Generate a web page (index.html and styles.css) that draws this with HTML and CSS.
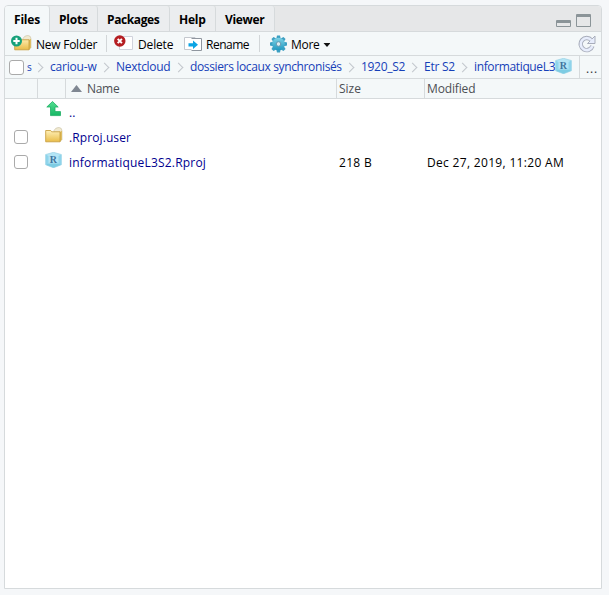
FILE: index.html
```html
<!DOCTYPE html>
<html lang="en">
<head>
<meta charset="utf-8">
<title>Files</title>
<link rel="stylesheet" href="styles.css">
</head>
<body>
<svg class="defs" width="0" height="0" aria-hidden="true">
  <defs>
    <linearGradient id="gold" x1="0" y1="0" x2="0" y2="1"><stop offset="0" stop-color="#fff0b8"/><stop offset="1" stop-color="#e9bc48"/></linearGradient>
    <linearGradient id="leaf" x1="0" y1="0" x2="0" y2="1"><stop offset="0" stop-color="#52df90"/><stop offset="1" stop-color="#17b765"/></linearGradient>
    <linearGradient id="teal" x1="0" y1="0" x2="0" y2="1"><stop offset="0" stop-color="#7fd3e6"/><stop offset="1" stop-color="#2198bf"/></linearGradient>
    <symbol id="folder" viewBox="0 0 18 17">
      <path d="M9 3.500Q10.500 .6 13 .6h1.500Q17 1 17 4v8.500l-2 2.300V5H9z" fill="#f1ead0" stroke="#cfc7ad" stroke-width=".7"/>
      <path d="M15 5l1.800-1.200v8.700L15 14.800z" fill="#dcb64e"/>
      <path d="M.7 3.500h5l1 1.300H15v10H.7z" fill="url(#gold)" stroke="#c9a144" stroke-width=".9"/>
    </symbol>
    <symbol id="cube" viewBox="0 0 17 16">
      <path d="M8.500 .3L16.300 2.500v10.300L8.500 15.800.7 12.800V2.500z" fill="#b4e5f5"/>
      <path d="M.7 2.500L3.500 4v7.500L.7 12.800zM13.500 4l2.800-1.500v10.300l-2.800-1.300z" fill="#8fd5ec"/>
      <path d="M.7 12.800l2.800-1.300h10l2.800 1.300-7.800 3z" fill="#7dcce3"/>
      <path d="M8.500 .3L16.300 2.500v10.300L8.500 15.800.7 12.800V2.500z" fill="none" stroke="#91cfe2" stroke-width=".6"/>
      <text x="8.300" y="10.800" text-anchor="middle" font-family="Liberation Serif, serif" font-size="10" font-weight="bold" fill="#40749e">R</text>
    </symbol>
  </defs>
</svg>
<main class="panel">
  <nav class="tabs">
    <div class="tab active t-files"><span>Files</span></div>
    <div class="tab t-plots"><span>Plots</span></div>
    <div class="tab t-packages"><span>Packages</span></div>
    <div class="tab t-help"><span>Help</span></div>
    <div class="tab t-viewer"><span>Viewer</span></div>
    <div class="window-buttons"><i class="minimize"></i><i class="maximize"></i></div>
  </nav>
  <div class="toolbar">
    <div class="tool new">
      <svg width="21" height="17" viewBox="0 0 21 17"><use href="#folder" x="3" y="0" width="18" height="17"/><circle cx="5.500" cy="6" r="5.500" fill="#16a17a"/><path d="M5.500 2.800v6.400M2.300 6h6.400" stroke="#fff" stroke-width="2"/></svg>
      <span>New Folder</span>
    </div>
    <div class="tool delete">
      <svg width="19" height="17" viewBox="0 0 19 17"><path d="M5.500 1.500h13v13h-13z" fill="#fff" stroke="#d0d3dc"/><circle cx="5.800" cy="6" r="5.700" fill="#b51e22"/><path d="M3.700 3.900l4.200 4.200M7.900 3.900L3.700 8.100" stroke="#fff" stroke-width="2"/></svg>
      <span>Delete</span>
    </div>
    <div class="tool rename">
      <svg width="18" height="16" viewBox="0 0 18 16"><path d="M.5 1.500h10.500v12H.5z" fill="#fff" stroke="#c4c8ce"/><path d="M7.500 2.500h10v12h-10" fill="#fff" stroke="#8f969f"/><path d="M5 5h8v7H5z" fill="#fff"/><path d="M4.500 7.200h4.500V4.500l5 4.300-5 4.300v-2.700H4.500z" fill="#0ba4e4"/></svg>
      <span>Rename</span>
    </div>
    <div class="tool more">
      <svg width="17" height="18" viewBox="-8.500 -9 17 18"><g fill="#3c9fc2"><path id="tooth" d="M-1.500-8.500h3l.9 4h-4.800z"/><use href="#tooth" transform="rotate(45)"/><use href="#tooth" transform="rotate(90)"/><use href="#tooth" transform="rotate(135)"/><use href="#tooth" transform="rotate(180)"/><use href="#tooth" transform="rotate(225)"/><use href="#tooth" transform="rotate(270)"/><use href="#tooth" transform="rotate(315)"/></g><circle r="6.300" fill="url(#teal)"/><circle r="2.300" fill="#dcecf1" stroke="#6298b1"/></svg>
      <span>More</span><i class="caret"></i>
    </div>
    <svg class="refresh" width="18" height="18" viewBox="0 0 18 18"><path d="M13.300 5.200A6 6 0 1 0 14.400 11" fill="none" stroke="#a8adbb" stroke-width="4.400"/><path d="M17 1v7.500H9.500z" fill="#e7edfc" stroke="#a8adbb"/><path d="M13.300 5.200A6 6 0 1 0 14.400 11" fill="none" stroke="#e7edfc" stroke-width="2.600"/></svg>
  </div>
  <div class="path">
    <i class="check"></i>
    <div class="crumb c-s"><span>s</span></div>
    <div class="crumb c-user"><span>cariou-w</span></div>
    <div class="crumb c-next"><span>Nextcloud</span></div>
    <div class="crumb c-doss"><span>dossiers locaux synchronisés</span></div>
    <div class="crumb c-year"><span>1920_S2</span></div>
    <div class="crumb c-etr"><span>Etr S2</span></div>
    <div class="crumb c-info"><span>informatiqueL3</span></div>
    <svg class="project" width="17" height="16"><use href="#cube"/></svg>
    <div class="browse">...</div>
  </div>
  <div class="grid header">
    <div></div><div></div>
    <div class="name"><i class="sort"></i><span>Name</span></div>
    <div class="size"><span>Size</span></div>
    <div class="modified"><span>Modified</span></div>
  </div>
  <div class="files">
    <div class="grid row up"><div></div>
      <div><svg width="16" height="16" viewBox="0 0 16 16"><path d="M6.500 .5l5.700 5.500H9v4.600h5.500v4H4.500V6H.8z" fill="url(#leaf)" stroke="#20ae65" stroke-width=".8"/></svg></div>
      <div><span>..</span></div><div></div><div></div></div>
    <div class="grid row user"><div><i class="check"></i></div>
      <div><svg width="18" height="17"><use href="#folder"/></svg></div>
      <div><span>.Rproj.user</span></div><div></div><div></div></div>
    <div class="grid row proj"><div><i class="check"></i></div>
      <div><svg width="17" height="16"><use href="#cube"/></svg></div>
      <div><span>informatiqueL3S2.Rproj</span></div>
      <div class="size"><span>218 B</span></div><div class="modified"><span>Dec 27, 2019, 11:20 AM</span></div></div>
  </div>
</main>
</body>
</html>
```
FILE: styles.css
```css
* { box-sizing: border-box; }
body { margin: 0; padding: 5px 7px 6px 4px; height: 595px; background: #f5f7f9; font: 12px/18px "Open Sans", "Noto Sans", sans-serif; color: #000; overflow: hidden; }
.defs { position: absolute; }
svg { display: block; flex: none; }
span { white-space: nowrap; }
.panel { height: 584px; display: flex; flex-direction: column; border: 1px solid #d6dadc; border-radius: 4px 4px 0 0; background: #fff; overflow: hidden; }
.tabs { height: 26px; flex: none; display: flex; background: #e6e7e8; border-bottom: 1px solid #d6dadc; }
.tab { height: 25px; flex: none; padding: 5px 0 0 9px; border-right: 1px solid #d6dadc; border-radius: 0 3px 0 0; background: #ebedef; font-weight: 700; letter-spacing: -.2px; }
.active { height: 26px; background: #f4f8f9; }
.t-files { width: 45px; }
.t-plots { width: 48px; }
.t-packages { width: 72px; letter-spacing: -.4px; }
.t-help { width: 46px; }
.t-viewer { width: 59px; letter-spacing: -.35px; }
.window-buttons { margin: 8px 10px 0 auto; display: flex; align-items: flex-end; height: 13px; gap: 5px; }
.minimize { width: 15px; height: 7px; border: 1px solid #8b9498; border-top-width: 3px; border-radius: 1px; }
.maximize { width: 15px; height: 13px; border: 1px solid #8b9498; border-top-width: 3px; border-radius: 1px; }
.toolbar { height: 24px; flex: none; display: flex; background: #f4f8f9; border-bottom: 1px solid #d6dadc; }
.tool { height: 17px; margin-top: 3px; display: flex; flex: none; }
.tool span { margin-top: 1px; }
.new { width: 102px; padding-left: 6px; gap: 4px; border-right: 1px solid #d2d6d8; }
.new span { letter-spacing: -.25px; }
.delete { width: 72px; padding-left: 7px; gap: 5px; letter-spacing: -.15px; }
.rename { width: 81px; padding-left: 5px; gap: 4px; border-right: 1px solid #d2d6d8; letter-spacing: -.5px; }
.rename svg { margin-top: 1px; }
.more { padding-left: 10px; gap: 4px; letter-spacing: -.3px; }
.caret { margin: 8px 0 0 0; width: 7px; height: 4px; background: #111; clip-path: polygon(0 0, 100% 0, 50% 100%); }
.refresh { margin: 3px 5px 0 auto; }
.path { height: 23px; flex: none; display: flex; background: #f4f8f9; border-bottom: 1px solid #d6dadc; color: #1640b8; }
.check { display: block; flex: none; width: 14px; height: 14px; border: 1px solid #aaa; border-radius: 3px; background: #fff; }
.path .check { width: 15px; height: 15px; margin: 4px 3px 0 4px; }
.crumb { flex: none; display: flex; justify-content: space-between; padding: 2px 8px 0 0; }
.crumb:not(.c-info)::after { content: ""; flex: none; width: 6px; height: 6px; margin: 6px 0 0; border: solid #c2c7cc; border-width: 1px 1px 0 0; transform: rotate(45deg); }
.c-s { width: 23px; }
.c-s span { font-size: 10px; }
.c-user { width: 66px; letter-spacing: -.2px; }
.c-next { width: 74px; letter-spacing: -.3px; }
.c-doss { width: 171px; letter-spacing: -.36px; }
.c-year { width: 63px; letter-spacing: -.3px; }
.c-etr { width: 50px; letter-spacing: -.25px; }
.c-info { width: 81px; padding-right: 0; letter-spacing: -.36px; }
.project { margin-top: 2px; }
.browse { margin-left: auto; width: 22px; border-left: 1px solid #d6dadc; padding: 4px 0 0 6px; color: #333; letter-spacing: .8px; }
.grid { display: grid; grid-template-columns: 33px 28px 271px 88px 1fr; flex: none; }
.header { height: 20px; background: #f4f8f9; border-bottom: 1px solid #d6dadc; color: #4c4f54; }
.header > div { border-right: 1px solid #d6dadc; padding-left: 2px; }
.header > div:last-child { border: 0; letter-spacing: -.15px; }
.header .name { display: flex; padding-left: 5px; gap: 5px; letter-spacing: -.3px; }
.header span { line-height: 19px; }
.sort { width: 11px; height: 7px; margin-top: 6px; background: #7f8792; clip-path: polygon(50% 0, 100% 100%, 0 100%); }
.row { height: 25px; }
.row > div:nth-child(1) { padding: 6px 0 0 9px; }
.row > div:nth-child(2) { padding: 3px 0 0 7px; }
.row > div:nth-child(3) { padding: 5px 0 0 3px; color: #00008f; letter-spacing: .1px; }
.row > div:nth-child(n+4) { padding: 5px 0 0 2px; letter-spacing: .32px; }
.proj > div:nth-child(3) { letter-spacing: .2px; }
.up > div:nth-child(2) { padding: 2px 0 0 8px; }
```
